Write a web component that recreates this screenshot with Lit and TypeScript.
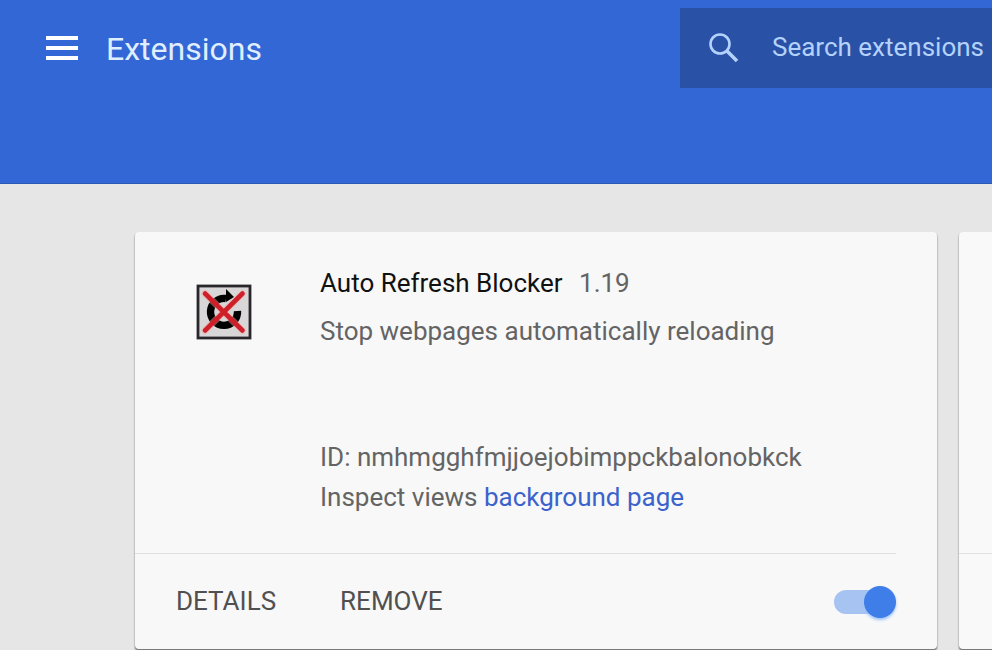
import { LitElement, html, css } from "lit";
import { customElement, property, state } from "lit/decorators.js";

@customElement("extensions-toolbar")
class ExtensionsToolbar extends LitElement {
  static styles = css`
    :host {
      display: flex;
      justify-content: space-between;
      align-items: flex-start;
      box-sizing: border-box;
      min-height: 184px;
      padding-top: 8px;
      background: #3367d6;
      border-bottom: 1px solid #2c59b8;
      color: #e0efff;
    }
    .brand {
      display: flex;
      align-items: center;
      height: 80px;
      padding-left: 46px;
      gap: 28px;
    }
    .menu {
      display: flex;
      padding: 0;
      border: 0;
      background: none;
      color: #fff;
    }
    h1 {
      margin: 0;
      padding-top: 2px;
      font-size: 32px;
      line-height: 40px;
      font-weight: 400;
    }
    .search {
      display: flex;
      align-items: center;
      box-sizing: border-box;
      width: 312px;
      height: 80px;
      padding-left: 28px;
      gap: 32px;
      background: #2951a5;
      color: #b4d2fb;
    }
    .search svg {
      flex: none;
    }
    input {
      flex: 1;
      min-width: 0;
      padding: 0 0 2px;
      border: 0;
      outline: 0;
      background: none;
      color: inherit;
      font: 400 26px/32px Roboto, sans-serif;
    }
    input::placeholder {
      color: #b4d2fb;
      opacity: 1;
    }
  `;

  render() {
    return html`
      <div class="brand">
        <button class="menu" aria-label="Main menu">
          <svg width="32" height="24" viewBox="0 0 32 24" fill="currentColor">
            <path d="M0 0h32v4H0zM0 10h32v4H0zM0 20h32v4H0z" />
          </svg>
        </button>
        <h1>Extensions</h1>
      </div>
      <label class="search">
        <svg width="32" height="32" viewBox="0 0 32 32" fill="none" stroke="currentColor" stroke-width="2.6">
          <circle cx="12" cy="12" r="9.5" />
          <path d="M18.5 18.5L29 29" stroke-width="3.6" />
        </svg>
        <input type="text" aria-label="Search extensions" placeholder="Search extensions" />
      </label>
    `;
  }
}

@customElement("extension-card")
class ExtensionCard extends LitElement {
  @property() name = "";
  @property() version = "";
  @property() description = "";
  @property() extensionId = "";
  @state() enabled = true;

  static styles = css`
    :host {
      display: flex;
      flex-direction: column;
      box-sizing: border-box;
      min-width: 0;
      min-height: 417px;
      background: #f8f8f8;
      border-radius: 4px;
      box-shadow: 0 1px 1px #777, 0 2px 2px #888;
      color: #646464;
      font-size: 26px;
      line-height: 40px;
      font-weight: 400;
    }
    .body {
      display: flex;
      flex: 1;
      gap: 68px;
      padding: 31px 40px 36px 61px;
    }
    .icon {
      flex: none;
      padding-top: 21px;
    }
    h2 {
      display: inline;
      margin: 0 10px 0 0;
      font-size: 26px;
      font-weight: 400;
      color: #111;
    }
    p {
      margin: 0;
    }
    .description {
      padding: 8px 0 86px;
    }
    a {
      color: #3c62cc;
      text-decoration: none;
    }
    .actions {
      display: flex;
      align-items: center;
      gap: 64px;
      box-sizing: border-box;
      height: 96px;
      margin-right: 41px;
      padding: 0 0 2px 41px;
      border-top: 1px solid #e2dfdf;
    }
    button {
      padding: 0;
      border: 0;
      background: none;
      color: #505050;
      font: 400 26px/40px Roboto, sans-serif;
    }
    .toggle {
      appearance: none;
      position: relative;
      width: 62px;
      height: 24px;
      margin: 2px 0 0 auto;
      border-radius: 12px;
      background: linear-gradient(#a6c3f1, #a6c3f1) left / 56px no-repeat;
    }
    .toggle::after {
      content: "";
      position: absolute;
      right: 0;
      top: -4px;
      width: 32px;
      height: 32px;
      border-radius: 50%;
      background: #3f7de8;
      box-shadow: 0 2px 3px #9cc4f8;
    }
    .toggle:not(:checked)::after {
      right: 30px;
      background: #fff;
    }
  `;

  render() {
    return html`
      <div class="body">
        <svg class="icon" width="56" height="56" viewBox="0 0 56 56" fill="none">
          <rect x="2" y="2" width="52" height="52" fill="#d8d6d6" stroke="#28262b" stroke-width="2.8" />
          <path d="M30 14.5A13.5 13.5 0 1 0 41.5 27" stroke="#000" stroke-width="7.4" />
          <path d="M30 5L38 13L30 18z" fill="#000" />
          <path d="M9 9.5L46.5 46.5M46.5 9.5L9 46.5" stroke="#f7a9a9" stroke-width="7" stroke-linecap="round" opacity=".45" />
          <path d="M9 9.5L46.5 46.5M46.5 9.5L9 46.5" stroke="#cf202a" stroke-width="4.6" stroke-linecap="round" />
        </svg>
        <div>
          <div><h2>${this.name}</h2> <span>${this.version}</span></div>
          <p class="description">${this.description}</p>
          <p>ID: ${this.extensionId}</p>
          <p>Inspect views <a href="#background">background page</a></p>
        </div>
      </div>
      <div class="actions">
        <button>DETAILS</button>
        <button>REMOVE</button>
        <input
          class="toggle"
          type="checkbox"
          aria-label="Enable ${this.name}"
          .checked=${this.enabled}
          @change=${(e: Event) => (this.enabled = (e.target as HTMLInputElement).checked)}
        />
      </div>
    `;
  }
}

@customElement("app-root")
class AppRoot extends LitElement {
  static styles = css`
    :host {
      display: flex;
      flex-direction: column;
      min-height: 100vh;
      overflow: hidden;
      background: #e7e6e6;
      font-family: Roboto, sans-serif;
    }
    main {
      display: grid;
      grid-template-columns: minmax(0, 1fr) 33px;
      gap: 22px;
      padding: 48px 0 1px 135px;
    }
    .next {
      box-sizing: border-box;
      padding-top: 321px;
      background: #f9f9f9;
      border-radius: 4px 0 0 4px;
      box-shadow: 0 1px 1px #777, 0 2px 2px #888;
    }
    .rule {
      height: 1px;
      background: #e2dfdf;
    }
  `;

  render() {
    return html`
      <extensions-toolbar></extensions-toolbar>
      <main>
        <extension-card
          name="Auto Refresh Blocker"
          version="1.19"
          description="Stop webpages automatically reloading"
          .extensionId=${"nmhmgghfmjjoejobimppckbalonobkck"}
        ></extension-card>
        <section class="next"><div class="rule"></div></section>
      </main>
    `;
  }
}
